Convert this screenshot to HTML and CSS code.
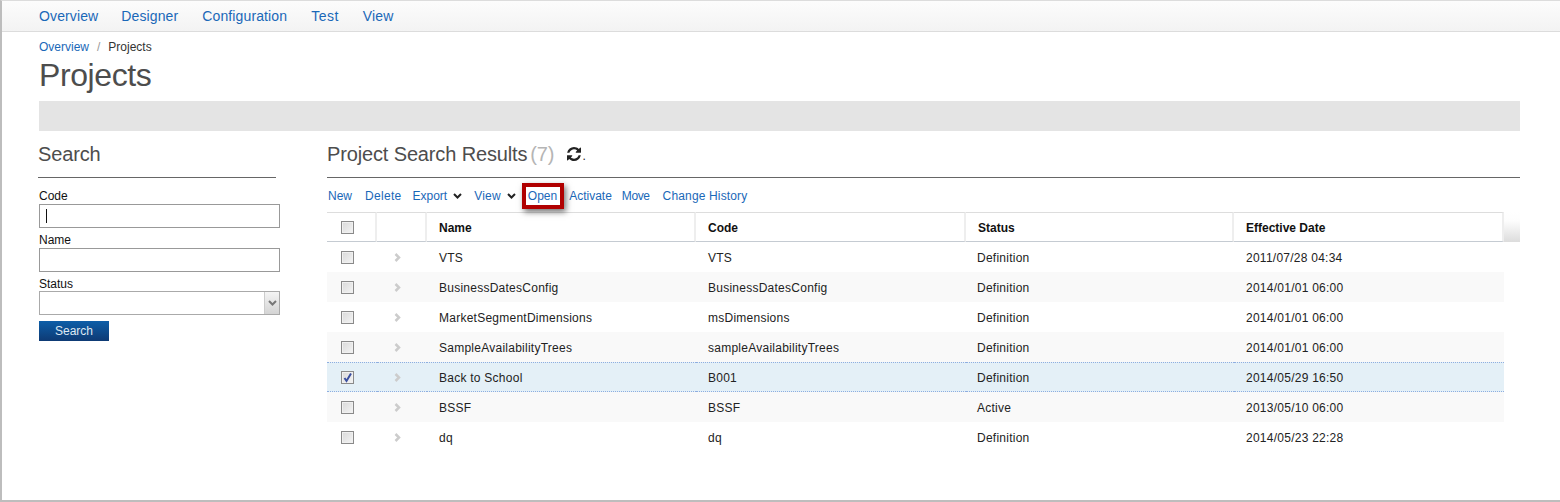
FILE: index.html
```html
<!DOCTYPE html>
<html lang="en">
<head>
<meta charset="utf-8">
<title>Projects</title>
<link rel="stylesheet" href="styles.css">
</head>
<body>
<div class="frame">
  <nav class="topnav">
    <a href="#" class="n-first">Overview</a><a href="#">Designer</a><a href="#">Configuration</a><a href="#" class="n-test">Test</a><a href="#">View</a>
  </nav>
  <main class="main">
    <div class="crumbs"><a href="#">Overview</a><span class="sep">/</span><span>Projects</span></div>
    <h1 class="title">Projects</h1>
    <div class="band"></div>
    <div class="columns">
      <aside class="side">
        <h2 class="heading side-heading">Search</h2>
        <form class="form">
          <label class="label">Code</label>
          <div class="field"><input class="input" type="text"><span class="caret"></span></div>
          <label class="label">Name</label>
          <div class="field"><input class="input" type="text"></div>
          <label class="label">Status</label>
          <div class="select"><span class="select-value"></span><span class="select-btn"><svg width="9" height="6" viewBox="0 0 9 6"><path d="M1 1l3.500 3.500L8 1" fill="none" stroke="#777" stroke-width="2"/></svg></span></div>
          <button class="btn" type="button">Search</button>
        </form>
      </aside>
      <section class="results">
        <h2 class="heading results-heading">Project Search Results<span class="count">(7)</span>
          <svg class="refresh" width="14" height="14" viewBox="128 128 1536 1536"><path d="M1639 1056q0 5-1 7-64 268-268 434.500t-478 166.500q-146 0-282.500-55t-243.500-157l-129 129q-19 19-45 19t-45-19-19-45v-448q0-26 19-45t45-19h448q26 0 45 19t19 45-19 45l-137 137q71 66 161 102t187 36q134 0 250-65t186-179q11-17 53-117 8-23 30-23h192q13 0 22.500 9.500t9.500 22.500zm25-800v448q0 26-19 45t-45 19h-448q-26 0-45-19t-19-45 19-45l138-138q-148-137-349-137-134 0-250 65t-186 179q-11 17-53 117-8 23-30 23h-199q-13 0-22.500-9.500t-9.500-22.500v-7q65-268 270-434.500t480-166.500q146 0 284 55.500t245 156.500l130-129q19-19 45-19t45 19 19 45z" fill="#222"/></svg><span class="dot">.</span></h2>
        <div class="toolbar">
          <a href="#" class="t-new">New</a>
          <a href="#" class="t-del">Delete</a>
          <a href="#" class="drop">Export<svg width="9" height="6" viewBox="0 0 9 6"><path d="M1 1l3.500 3.500L8 1" fill="none" stroke="#222" stroke-width="2"/></svg></a>
          <a href="#" class="drop t-view">View<svg width="9" height="6" viewBox="0 0 9 6"><path d="M1 1l3.500 3.500L8 1" fill="none" stroke="#222" stroke-width="2"/></svg></a>
          <a href="#" class="open">Open<span class="callout"></span></a>
          <a href="#" class="t-act">Activate</a>
          <a href="#" class="t-move">Move</a>
          <a href="#" class="t-hist">Change History</a>
        </div>
        <table class="grid">
          <colgroup><col class="c1"><col class="c2"><col class="c3"><col class="c4"><col class="c5"><col class="c6"><col class="c7"></colgroup>
          <thead>
            <tr>
              <th class="center"><span class="cb"></span></th><th></th><th>Name</th><th>Code</th><th>Status</th><th>Effective Date</th><th class="gutter"></th>
            </tr>
          </thead>
          <tbody>
            <tr><td class="center"><span class="cb"></span></td><td class="center"><svg class="chev" width="7" height="9" viewBox="0 0 7 9"><path d="M1.500 1l3.500 3.500L1.500 8" fill="none" stroke="#ccc" stroke-width="2.500"/></svg></td><td>VTS</td><td>VTS</td><td class="st">Definition</td><td>2011/07/28 04:34</td></tr>
            <tr class="alt"><td class="center"><span class="cb"></span></td><td class="center"><svg class="chev" width="7" height="9" viewBox="0 0 7 9"><path d="M1.500 1l3.500 3.500L1.500 8" fill="none" stroke="#ccc" stroke-width="2.500"/></svg></td><td>BusinessDatesConfig</td><td>BusinessDatesConfig</td><td class="st">Definition</td><td>2014/01/01 06:00</td></tr>
            <tr><td class="center"><span class="cb"></span></td><td class="center"><svg class="chev" width="7" height="9" viewBox="0 0 7 9"><path d="M1.500 1l3.500 3.500L1.500 8" fill="none" stroke="#ccc" stroke-width="2.500"/></svg></td><td>MarketSegmentDimensions</td><td>msDimensions</td><td class="st">Definition</td><td>2014/01/01 06:00</td></tr>
            <tr class="alt"><td class="center"><span class="cb"></span></td><td class="center"><svg class="chev" width="7" height="9" viewBox="0 0 7 9"><path d="M1.500 1l3.500 3.500L1.500 8" fill="none" stroke="#ccc" stroke-width="2.500"/></svg></td><td>SampleAvailabilityTrees</td><td>sampleAvailabilityTrees</td><td class="st">Definition</td><td>2014/01/01 06:00</td></tr>
            <tr class="selected"><td class="center"><span class="cb"><svg width="11" height="11" viewBox="0 0 11 11"><path d="M2.500 6l2 3L9 1.500" fill="none" stroke="#3a4fa0" stroke-width="2"/></svg></span></td><td class="center"><svg class="chev" width="7" height="9" viewBox="0 0 7 9"><path d="M1.500 1l3.500 3.500L1.500 8" fill="none" stroke="#ccc" stroke-width="2.500"/></svg></td><td>Back to School</td><td>B001</td><td class="st">Definition</td><td>2014/05/29 16:50</td></tr>
            <tr class="alt"><td class="center"><span class="cb"></span></td><td class="center"><svg class="chev" width="7" height="9" viewBox="0 0 7 9"><path d="M1.500 1l3.500 3.500L1.500 8" fill="none" stroke="#ccc" stroke-width="2.500"/></svg></td><td>BSSF</td><td>BSSF</td><td class="st">Active</td><td>2013/05/10 06:00</td></tr>
            <tr><td class="center"><span class="cb"></span></td><td class="center"><svg class="chev" width="7" height="9" viewBox="0 0 7 9"><path d="M1.500 1l3.500 3.500L1.500 8" fill="none" stroke="#ccc" stroke-width="2.500"/></svg></td><td>dq</td><td>dq</td><td class="st">Definition</td><td>2014/05/23 22:28</td></tr>
          </tbody>
        </table>
      </section>
    </div>
  </main>
</div>
</body>
</html>
```
FILE: styles.css
```css
* { box-sizing: border-box; }
html, body { margin: 0; padding: 0; }
body { font-family: "Liberation Sans", Arial, sans-serif; font-size: 12px; color: #222; background: #fff; }
a { color: #1a68b8; text-decoration: none; }

.frame { height: 502px; border-left: 2px solid #bdbdbd; border-bottom: 2px solid #bdbdbd; border-top: 1px solid #dcdcdc; overflow: hidden; }

.topnav { height: 31px; display: flex; align-items: center; gap: 24px; padding-left: 37px; font-size: 14px; letter-spacing: .12px; background: linear-gradient(#fcfcfc, #f3f3f3); border-bottom: 1px solid #dcdcdc; }
.n-first { margin-right: -1px; }
.n-test { letter-spacing: .5px; }

.main { padding: 0 40px 0 36px; }
.crumbs { display: flex; padding: 8px 0 0 1px; line-height: 14px; color: #333; }
.sep { color: #999; margin: 0 8px; }
.title { margin: 0 0 0 1px; font-size: 32px; font-weight: 400; letter-spacing: -.4px; line-height: 42px; height: 40px; color: #4d4d4d; }
.band { height: 30px; margin: 7px 0 0 1px; background: #e4e4e4; }

.columns { display: flex; gap: 47px; padding-top: 12px; }
.side { width: 242px; flex: none; }
.results { flex: 1; min-width: 0; }

.heading { margin: 0; height: 35px; font-size: 20px; font-weight: 400; letter-spacing: -.14px; line-height: 23px; color: #4d4d4d; border-bottom: 1px solid #666; }
.side-heading { width: 238px; }
.results-heading { display: flex; align-items: flex-start; }
.count { color: #b5b5b5; margin-left: 3px; }
.refresh { margin: 4px 0 0 13px; }
.dot { font-size: 12px; line-height: 26px; margin-left: 1px; color: #222; }

.form { padding: 11px 0 0 1px; }
.label { display: block; line-height: 14px; height: 14px; color: #111; }
.field { position: relative; height: 24px; margin: 1px 0 5px; }
.input { display: block; width: 241px; height: 24px; margin: 0; border: 1px solid #999; background: #fff; padding: 0 6px; }
.caret { position: absolute; left: 7px; top: 5px; width: 1px; height: 14px; background: #111; }
.select { display: flex; width: 241px; height: 24px; border: 1px solid #aaa; background: #fff; }
.select-value { flex: 1; }
.select-btn { width: 15px; display: flex; align-items: center; justify-content: center; border-left: 1px solid #ccc; background: linear-gradient(#f4f4f4, #d4d4d4); }
.btn { display: block; width: 70px; height: 20px; margin-top: 6px; padding: 0; border: 0; font: 12px "Liberation Sans", Arial, sans-serif; color: #dfe8f2; background: linear-gradient(#0d5ea8, #0e3a74); }

.toolbar { display: flex; align-items: center; height: 34px; padding: 2px 0 0 1px; }
.toolbar a { margin-right: 13px; }
.toolbar .t-del { letter-spacing: .3px; margin-right: 11px; }
.toolbar .drop { display: flex; align-items: center; gap: 6px; margin-right: 12px; }
.toolbar .t-view { margin-right: 12px; letter-spacing: .2px; }
.toolbar .open { position: relative; margin-right: 12px; }
.toolbar .t-act { margin-right: 10px; }
.toolbar .t-move { letter-spacing: -.4px; margin-right: 13px; }
.toolbar .t-hist { letter-spacing: .15px; margin-right: 0; }
.callout { position: absolute; left: -6px; top: -6px; width: 42px; height: 26px; border: 4px solid #b00000; box-shadow: 2px 3px 6px rgba(0, 0, 0, .55); }

.grid { width: 1193px; table-layout: fixed; border-collapse: separate; border-spacing: 0; }
.c1 { width: 50px; } .c2 { width: 50px; } .c3 { width: 269px; } .c4 { width: 270px; } .c5 { width: 268px; } .c6 { width: 270px; } .c7 { width: 16px; }
.grid th { height: 30px; padding: 1px 12px 0; text-align: left; font-size: 12px; color: #111; border-top: 1px solid #ddd; border-bottom: 1px solid #c5cbd2; border-right: 2px solid #eee; background: #fff; }
.grid th.gutter { padding: 0; border: 0; background: linear-gradient(#fff, #fdfdfd 30%, #dcdcdc); }
.grid th.center { padding: 0 8px 0 0; text-align: center; }
.grid td { height: 30px; padding: 2px 12px 0; color: #222; letter-spacing: .25px; background: #fff; white-space: nowrap; }
.grid td.st { padding-left: 11px; }
.grid td.center { padding: 0 10px 0 0; text-align: center; }
.grid .alt td { background: #f9f9f9; }
.grid .selected td { background: #e4f0f7; border-top: 1px dotted #8eaee0; border-bottom: 1px dotted #8eaee0; }
.cb { display: inline-flex; align-items: center; justify-content: center; width: 13px; height: 13px; vertical-align: middle; border: 1px solid #8a8a8a; background: linear-gradient(135deg, #d9d9d9, #f4f4f4); box-shadow: inset 0 0 0 1px #f0f0f0; }
.chev { display: inline-block; vertical-align: middle; }
```
